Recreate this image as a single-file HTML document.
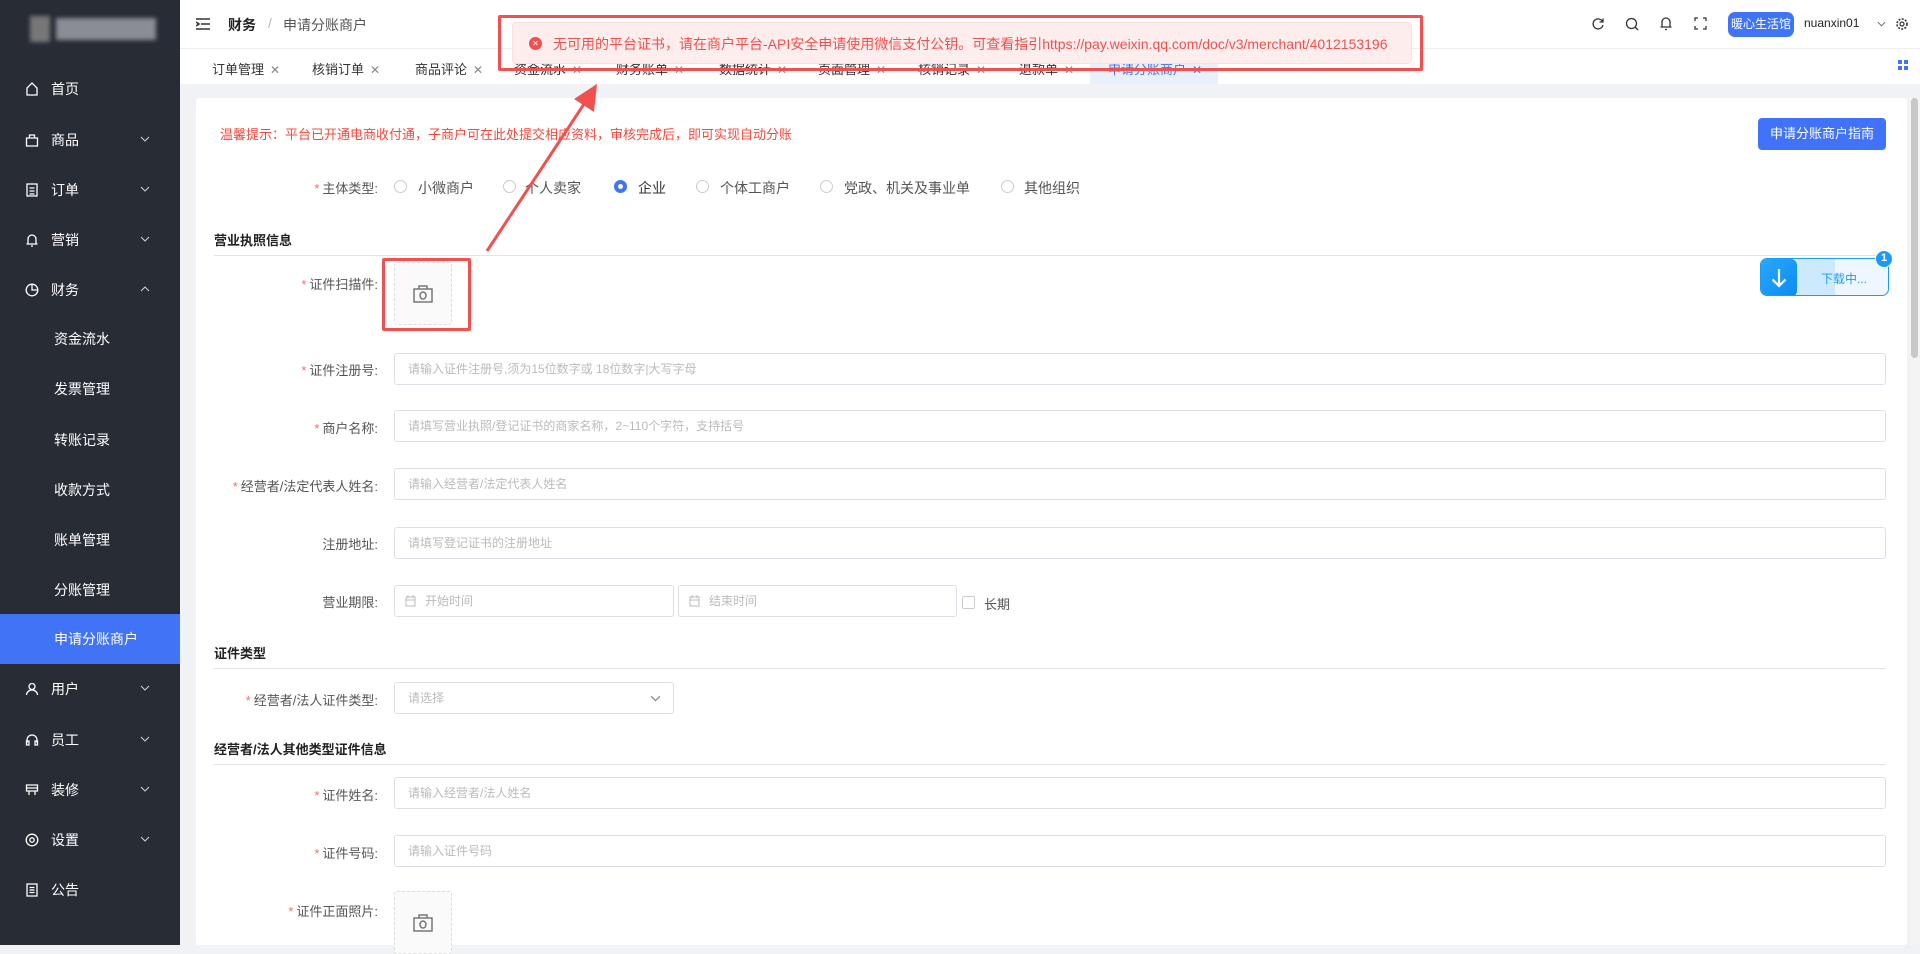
<!DOCTYPE html>
<html><head><meta charset="utf-8"><style>
*{box-sizing:border-box;margin:0;padding:0}
body{width:1920px;height:945px;overflow:hidden;font-family:"Liberation Sans","Noto Sans CJK SC",sans-serif;background:#f0f2f5;position:relative;color:#333}
.a{position:absolute}
.side{left:0;top:0;width:180px;height:945px;background:#282c35;color:#fff}
.mi{position:absolute;left:0;width:180px;height:50px;line-height:50px;font-size:14px;color:#fff}
.mi .ic{position:absolute;left:25px;top:18px;width:14px;height:14px}
.mi .t{position:absolute;left:51px}
.mi .ch{position:absolute;left:140px;top:21px;width:10px;height:6px}
.sub .t{left:54px}
.act{background:#4073f6}
.hdr{left:180px;top:0;width:1740px;height:49px;background:#fff;border-bottom:1px solid #eee}
.tabs{left:180px;top:49px;width:1740px;height:35px;background:#fff;font-size:13px;color:#333}
.tab{position:absolute;top:10px}
.tab i{font-style:normal;color:#888;margin-left:6px;font-size:12px}
.card{left:196px;top:98px;width:1711px;height:847px;background:#fff;border-radius:3px}
.lbl{position:absolute;width:200px;left:178px;text-align:right;font-size:13px;color:#555}
.lbl b{color:#f56c6c;font-weight:normal;margin-right:3px}
.inp{position:absolute;left:394px;width:1492px;height:32px;border:1px solid #dcdfe6;border-radius:3px;font-size:12px;color:#bbb;line-height:30px;padding-left:13px}
.sec{position:absolute;left:214px;width:1672px;font-size:13px;font-weight:bold;color:#222;border-bottom:1px solid #e4e4e4;padding-bottom:6px}
.rad{position:absolute;top:180px;width:13px;height:13px;border:1px solid #ccc;border-radius:50%}
.rt{position:absolute;top:178px;font-size:14px;color:#555}
.up{position:absolute;left:394px;width:58px;height:63px;background:#fafafa;border:1px dashed #ddd;border-radius:3px}
</style></head><body>
<div class="a side">
  <div class="a" style="left:30px;top:16px;width:20px;height:26px;background:#777;filter:blur(2px)"></div>
  <div class="a" style="left:56px;top:18px;width:100px;height:22px;background:#8a8d94;filter:blur(2px)"></div>
  <div class="mi" style="top:64px"><svg class="ic" viewBox="0 0 14 14"><path d="M2 13V6L7 1l5 5v7z" fill="none" stroke="#fff" stroke-width="1.3"/></svg><span class="t">首页</span></div>
  <div class="mi" style="top:115px"><svg class="ic" viewBox="0 0 14 14"><path d="M1.5 5h11v8h-11zM4.5 5V2h5v3" fill="none" stroke="#fff" stroke-width="1.3"/></svg><span class="t">商品</span><svg class="ch" viewBox="0 0 10 6"><path d="M1 1l4 4 4-4" fill="none" stroke="#ccc" stroke-width="1.1"/></svg></div>
  <div class="mi" style="top:165px"><svg class="ic" viewBox="0 0 14 14"><path d="M2 1h10v12H2zM4.5 5h5M4.5 8h5M4.5 11h5" fill="none" stroke="#fff" stroke-width="1.3"/></svg><span class="t">订单</span><svg class="ch" viewBox="0 0 10 6"><path d="M1 1l4 4 4-4" fill="none" stroke="#ccc" stroke-width="1.1"/></svg></div>
  <div class="mi" style="top:215px"><svg class="ic" viewBox="0 0 14 14"><path d="M3 11V6a4 4 0 018 0v5M1.5 11h11M6 13h2" fill="none" stroke="#fff" stroke-width="1.3"/></svg><span class="t">营销</span><svg class="ch" viewBox="0 0 10 6"><path d="M1 1l4 4 4-4" fill="none" stroke="#ccc" stroke-width="1.1"/></svg></div>
  <div class="mi" style="top:265px"><svg class="ic" viewBox="0 0 14 14"><circle cx="7" cy="7" r="5.8" fill="none" stroke="#fff" stroke-width="1.3"/><path d="M7 1.5V7h5.5" fill="none" stroke="#fff" stroke-width="1.3"/></svg><span class="t">财务</span><svg class="ch" viewBox="0 0 10 6"><path d="M1 5l4-4 4 4" fill="none" stroke="#ccc" stroke-width="1.1"/></svg></div>
  <div class="mi sub" style="top:314px"><span class="t">资金流水</span></div>
  <div class="mi sub" style="top:364px"><span class="t">发票管理</span></div>
  <div class="mi sub" style="top:415px"><span class="t">转账记录</span></div>
  <div class="mi sub" style="top:465px"><span class="t">收款方式</span></div>
  <div class="mi sub" style="top:515px"><span class="t">账单管理</span></div>
  <div class="mi sub" style="top:565px"><span class="t">分账管理</span></div>
  <div class="mi sub act" style="top:614px"><span class="t">申请分账商户</span></div>
  <div class="mi" style="top:664px"><svg class="ic" viewBox="0 0 14 14"><circle cx="7" cy="4.5" r="3" fill="none" stroke="#fff" stroke-width="1.3"/><path d="M1.5 13a5.5 5 0 0111 0" fill="none" stroke="#fff" stroke-width="1.3"/></svg><span class="t">用户</span><svg class="ch" viewBox="0 0 10 6"><path d="M1 1l4 4 4-4" fill="none" stroke="#ccc" stroke-width="1.1"/></svg></div>
  <div class="mi" style="top:715px"><svg class="ic" viewBox="0 0 14 14"><path d="M2 10V7a5 5 0 0110 0v3M1.5 8h2.5v4H1.5zM10 8h2.5v4H10z" fill="none" stroke="#fff" stroke-width="1.3"/></svg><span class="t">员工</span><svg class="ch" viewBox="0 0 10 6"><path d="M1 1l4 4 4-4" fill="none" stroke="#ccc" stroke-width="1.1"/></svg></div>
  <div class="mi" style="top:765px"><svg class="ic" viewBox="0 0 14 14"><path d="M1.5 2h11v6h-11zM4 8v4M10 8v4M1.5 5h11" fill="none" stroke="#fff" stroke-width="1.3"/></svg><span class="t">装修</span><svg class="ch" viewBox="0 0 10 6"><path d="M1 1l4 4 4-4" fill="none" stroke="#ccc" stroke-width="1.1"/></svg></div>
  <div class="mi" style="top:815px"><svg class="ic" viewBox="0 0 14 14"><circle cx="7" cy="7" r="5.8" fill="none" stroke="#fff" stroke-width="1.3"/><circle cx="7" cy="7" r="2.2" fill="none" stroke="#fff" stroke-width="1.3"/></svg><span class="t">设置</span><svg class="ch" viewBox="0 0 10 6"><path d="M1 1l4 4 4-4" fill="none" stroke="#ccc" stroke-width="1.1"/></svg></div>
  <div class="mi" style="top:865px"><svg class="ic" viewBox="0 0 14 14"><path d="M2 1h10v12H2zM4.5 4.5h5M4.5 7h5M4.5 9.5h5" fill="none" stroke="#fff" stroke-width="1.3"/></svg><span class="t">公告</span></div>
</div>

<div class="a hdr">
  <svg class="a" style="left:16px;top:18px" width="14" height="12" viewBox="0 0 14 12"><path d="M0 1h14M5 6h9M0 11h14M0 4l3 2-3 2" fill="none" stroke="#333" stroke-width="1.6"/></svg>
  <span class="a" style="left:48px;top:15px;font-size:14px;font-weight:bold;color:#222">财务</span>
  <span class="a" style="left:88px;top:15px;font-size:14px;color:#bbb">/</span>
  <span class="a" style="left:103px;top:15px;font-size:14px;color:#555">申请分账商户</span>
  <svg class="a" style="left:1411px;top:17px" width="14" height="14" viewBox="0 0 14 14"><path d="M11.5 4.5A5 5 0 1012 8M12 1.5v3.5H8.5" fill="none" stroke="#333" stroke-width="1.3"/></svg>
  <svg class="a" style="left:1445px;top:17px" width="14" height="14" viewBox="0 0 14 14"><circle cx="6.5" cy="6.5" r="5" fill="none" stroke="#333" stroke-width="1.3"/><path d="M10 10l3 3" stroke="#333" stroke-width="1.3"/></svg>
  <svg class="a" style="left:1479px;top:16px" width="14" height="15" viewBox="0 0 14 15"><path d="M3 11V6a4 4 0 018 0v5M1.5 11h11M6 13.5h2" fill="none" stroke="#333" stroke-width="1.3"/></svg>
  <svg class="a" style="left:1514px;top:17px" width="13" height="13" viewBox="0 0 13 13"><path d="M1 4V1h3M9 1h3v3M12 9v3H9M4 12H1V9" fill="none" stroke="#333" stroke-width="1.3"/></svg>
  <div class="a" style="left:1548px;top:12px;width:66px;height:25px;background:#3f74f6;border-radius:7px;color:#fff;font-size:12px;line-height:25px;text-align:center">暖心生活馆</div>
  <span class="a" style="left:1624px;top:16px;font-size:12px;color:#222">nuanxin01</span>
  <svg class="a" style="left:1697px;top:21px" width="9" height="6" viewBox="0 0 10 6"><path d="M1 1l4 4 4-4" fill="none" stroke="#666" stroke-width="1.1"/></svg>
  <svg class="a" style="left:1715px;top:17px" width="14" height="14" viewBox="0 0 14 14"><circle cx="7" cy="7" r="2" fill="none" stroke="#333" stroke-width="1.2"/><circle cx="7" cy="7" r="5" fill="none" stroke="#333" stroke-width="1.6" stroke-dasharray="2 1.3"/></svg>
</div>

<div class="a tabs">
  <span class="tab" style="left:32px">订单管理<i>✕</i></span>
  <span class="tab" style="left:132px">核销订单<i>✕</i></span>
  <span class="tab" style="left:235px">商品评论<i>✕</i></span>
  <span class="tab" style="left:334px">资金流水<i>✕</i></span>
  <span class="tab" style="left:436px">财务账单<i>✕</i></span>
  <span class="tab" style="left:539px">数据统计<i>✕</i></span>
  <span class="tab" style="left:638px">页面管理<i>✕</i></span>
  <span class="tab" style="left:738px">核销记录<i>✕</i></span>
  <span class="tab" style="left:839px">退款单<i>✕</i></span>
  <div class="a" style="left:910px;top:0;width:128px;height:35px;background:#e8f0fe;border-radius:8px 8px 0 0"></div>
  <span class="tab" style="left:928px;color:#3f74f6">申请分账商户<i style="color:#3f74f6">✕</i></span>
  <svg class="a" style="left:1718px;top:11px" width="10" height="10" viewBox="0 0 10 10"><path d="M0 0h4v4H0zM6 0h4v4H6zM0 6h4v4H0zM6 6h4v4H6z" fill="#3f74f6"/></svg>
</div>

<div class="a" style="left:1910px;top:98px;width:10px;height:847px;background:#f4f4f4"></div>
<div class="a" style="left:1911px;top:98px;width:7px;height:260px;background:#c8c8c8;border-radius:4px"></div>

<div class="a card"></div>
<div class="a" style="left:220px;top:124px;font-size:13px;color:#f5483b">温馨提示：平台已开通电商收付通，子商户可在此处提交相应资料，审核完成后，即可实现自动分账</div>
<div class="a" style="left:1758px;top:118px;width:128px;height:32px;background:#4073fa;border-radius:4px;color:#fff;font-size:13px;line-height:32px;text-align:center">申请分账商户指南</div>

<div class="lbl" style="top:178px"><b>*</b>主体类型:</div>
<div class="rad" style="left:394px"></div><span class="rt" style="left:418px">小微商户</span>
<div class="rad" style="left:503px"></div><span class="rt" style="left:525px">个人卖家</span>
<div class="rad" style="left:614px;border:4px solid #3f74f6"></div><span class="rt" style="left:638px;color:#333">企业</span>
<div class="rad" style="left:696px"></div><span class="rt" style="left:720px">个体工商户</span>
<div class="rad" style="left:820px"></div><span class="rt" style="left:844px">党政、机关及事业单</span>
<div class="rad" style="left:1001px"></div><span class="rt" style="left:1024px">其他组织</span>

<div class="sec" style="top:230px">营业执照信息</div>
<div class="lbl" style="top:274px"><b>*</b>证件扫描件:</div>
<div class="up" style="top:262px"><svg class="a" style="left:18px;top:22px" width="20" height="18" viewBox="0 0 20 18"><path d="M1 4h18v13H1zM6 4V1h8v3" fill="none" stroke="#777" stroke-width="1.5"/><ellipse cx="10" cy="10.5" rx="3" ry="3.5" fill="none" stroke="#777" stroke-width="1.5"/></svg></div>
<div class="a" style="left:382px;top:258px;width:89px;height:73px;border:3px solid #f0504e;border-radius:2px"></div>

<div class="a" style="left:1760px;top:258px;width:129px;height:38px;border:1px solid #1c9bf5;border-radius:7px;background:#eef7ff;overflow:hidden">
  <div class="a" style="left:36px;top:0;width:38px;height:38px;background:#cde9fd"></div>
  <div class="a" style="left:0;top:0;width:36px;height:38px;background:linear-gradient(135deg,#2aa6fb,#0b8cf3);border-radius:6px"></div>
  <svg class="a" style="left:10px;top:9px" width="16" height="20" viewBox="0 0 16 20"><path d="M8 1v17M1.5 11.5L8 18l6.5-6.5" fill="none" stroke="#fff" stroke-width="2.2"/></svg>
  <span class="a" style="left:60px;top:11px;font-size:12px;color:#1c9bf5">下载中...</span>
</div>
<div class="a" style="left:1875px;top:250px;width:18px;height:18px;background:#1c9bf5;border:1.5px solid #fff;border-radius:50%;color:#fff;font-size:11px;font-weight:bold;text-align:center;line-height:15px">1</div>

<div class="lbl" style="top:360px"><b>*</b>证件注册号:</div>
<div class="inp" style="top:353px">请输入证件注册号,须为15位数字或 18位数字|大写字母</div>
<div class="lbl" style="top:418px"><b>*</b>商户名称:</div>
<div class="inp" style="top:410px">请填写营业执照/登记证书的商家名称，2~110个字符，支持括号</div>
<div class="lbl" style="top:476px"><b>*</b>经营者/法定代表人姓名:</div>
<div class="inp" style="top:468px">请输入经营者/法定代表人姓名</div>
<div class="lbl" style="top:534px">注册地址:</div>
<div class="inp" style="top:527px">请填写登记证书的注册地址</div>
<div class="lbl" style="top:592px">营业期限:</div>
<div class="inp" style="top:585px;width:280px;padding-left:30px">开始时间</div>
<div class="inp" style="top:585px;left:678px;width:279px;padding-left:30px">结束时间</div>
<svg class="a" style="left:405px;top:595px" width="11" height="12" viewBox="0 0 11 12"><path d="M1 2h9v9H1zM1 5h9M3 0v3M8 0v3" fill="none" stroke="#bbb"/></svg>
<svg class="a" style="left:689px;top:595px" width="11" height="12" viewBox="0 0 11 12"><path d="M1 2h9v9H1zM1 5h9M3 0v3M8 0v3" fill="none" stroke="#bbb"/></svg>
<div class="a" style="left:962px;top:596px;width:13px;height:13px;border:1px solid #ccc;border-radius:2px"></div>
<span class="a" style="left:984px;top:594px;font-size:13px;color:#555">长期</span>

<div class="sec" style="top:643px">证件类型</div>
<div class="lbl" style="top:690px"><b>*</b>经营者/法人证件类型:</div>
<div class="inp" style="top:682px;width:280px">请选择</div>
<svg class="a" style="left:650px;top:695px" width="11" height="7" viewBox="0 0 10 6"><path d="M1 1l4 4 4-4" fill="none" stroke="#888" stroke-width="1.1"/></svg>

<div class="sec" style="top:739px">经营者/法人其他类型证件信息</div>
<div class="lbl" style="top:785px"><b>*</b>证件姓名:</div>
<div class="inp" style="top:777px">请输入经营者/法人姓名</div>
<div class="lbl" style="top:843px"><b>*</b>证件号码:</div>
<div class="inp" style="top:835px">请输入证件号码</div>
<div class="lbl" style="top:901px"><b>*</b>证件正面照片:</div>
<div class="up" style="top:891px"><svg class="a" style="left:18px;top:22px" width="20" height="18" viewBox="0 0 20 18"><path d="M1 4h18v13H1zM6 4V1h8v3" fill="none" stroke="#777" stroke-width="1.5"/><ellipse cx="10" cy="10.5" rx="3" ry="3.5" fill="none" stroke="#777" stroke-width="1.5"/></svg></div>

<div class="a" style="left:498px;top:15px;width:925px;height:56px;border:3px solid #f0504e;border-radius:2px"></div>
<div class="a" style="left:512px;top:22px;width:900px;height:42px;background:#feeded;border:1px solid #fcdede;border-radius:4px">
  <div class="a" style="left:16px;top:14px;width:13px;height:13px;border-radius:50%;background:#f0504e;color:#fff;font-size:8px;text-align:center;line-height:13px">✕</div>
  <span class="a" style="left:40px;top:11px;font-size:14px;color:#f0504e;white-space:nowrap">无可用的平台证书，请在商户平台-API安全申请使用微信支付公钥。可查看指引https://pay.weixin.qq.com/doc/v3/merchant/4012153196</span>
</div>

<svg class="a" style="left:0;top:0" width="1920" height="945"><line x1="487" y1="251" x2="588" y2="98" stroke="#f0504e" stroke-width="3"/><path d="M597 84L594 112L574 99z" fill="#f0504e"/></svg>
</body></html>
